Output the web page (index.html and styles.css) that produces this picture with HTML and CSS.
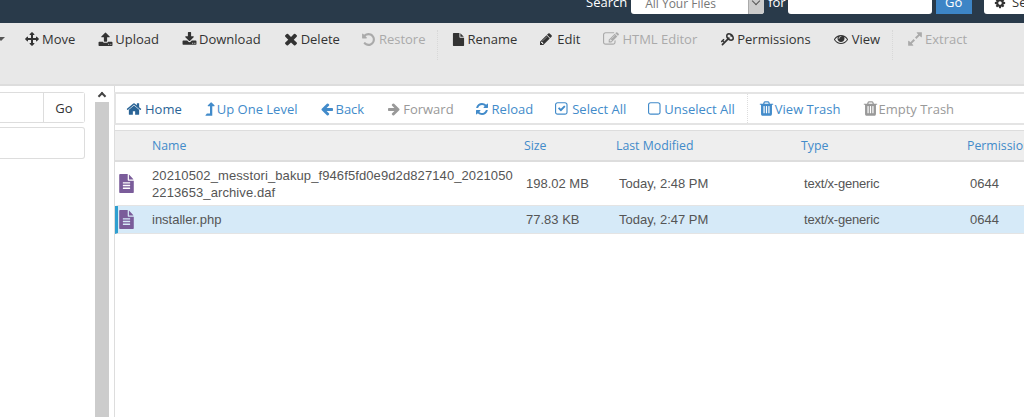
FILE: index.html
```html
<!DOCTYPE html>
<html lang="en">
<head>
    <meta charset="UTF-8">
    <title>File Manager</title>
    <link rel="stylesheet" href="styles.css">
</head>
<body>
    <svg class="sprite" xmlns="http://www.w3.org/2000/svg">
        <symbol id="i-home" viewBox="0 0 1792 1792"><path d="M1472 992v480q0 26-19 45t-45 19h-384v-384h-256v384h-384q-26 0-45-19t-19-45v-480q0-1 .5-3t.5-3l575-474 575 474q1 2 1 6zm223-69l-62 74q-8 9-21 11h-3q-13 0-21-7l-692-577-692 577q-12 8-24 7-13-2-21-11l-62-74q-8-10-7-23.5t11-21.5l719-599q32-26 76-26t76 26l244 204v-195q0-14 9-23t23-9h192q14 0 23 9t9 23v408l219 182q10 8 11 21.5t-7 23.5z"/></symbol>
        <symbol id="i-left" viewBox="0 0 1792 1792"><path d="M1664 896v128q0 53-32.5 90.5t-84.5 37.5h-704l293 294q38 36 38 90t-38 90l-75 76q-37 37-90 37-52 0-91-37l-651-652q-37-37-37-90 0-52 37-91l651-650q38-38 91-38 52 0 90 38l75 74q38 38 38 91t-38 91l-293 293h704q52 0 84.5 37.5t32.5 90.5z"/></symbol>
        <symbol id="i-right" viewBox="0 0 1792 1792"><path d="M1600 960q0 54-37 91l-651 651q-39 37-91 37-51 0-90-37l-75-75q-38-38-38-91t38-91l293-293h-704q-52 0-84.5-37.5t-32.5-90.5v-128q0-53 32.5-90.5t84.5-37.5h704l-293-294q-38-36-38-90t38-90l75-75q38-38 90-38 53 0 91 38l651 651q37 35 37 90z"/></symbol>
        <symbol id="i-times" viewBox="0 0 1792 1792"><path d="M1490 1322q0 40-28 68l-136 136q-28 28-68 28t-68-28l-294-294-294 294q-28 28-68 28t-68-28l-136-136q-28-28-28-68t28-68l294-294-294-294q-28-28-28-68t28-68l136-136q28-28 68-28t68 28l294 294 294-294q28-28 68-28t68 28l136 136q28 28 28 68t-28 68l-294 294 294 294q28 28 28 68z"/></symbol>
        <symbol id="i-file" viewBox="0 0 1792 1792"><path d="M1152 512v-472q22 14 36 28l408 408q14 14 28 36h-472zm-128 32q0 40 28 68t68 28h544v1056q0 40-28 68t-68 28h-1344q-40 0-68-28t-28-68v-1600q0-40 28-68t68-28h800v544z"/></symbol>
        <symbol id="i-file-text" viewBox="0 0 1792 1792" preserveAspectRatio="none"><path d="M1596 476q14 14 28 36h-472v-472q22 14 36 28zm-476 164h544v1056q0 40-28 68t-68 28h-1344q-40 0-68-28t-28-68v-1600q0-40 28-68t68-28h800v544q0 40 28 68t68 28zm160 736v-64q0-14-9-23t-23-9h-704q-14 0-23 9t-9 23v64q0 14 9 23t23 9h704q14 0 23-9t9-23zm0-256v-64q0-14-9-23t-23-9h-704q-14 0-23 9t-9 23v64q0 14 9 23t23 9h704q14 0 23-9t9-23zm0-256v-64q0-14-9-23t-23-9h-704q-14 0-23 9t-9 23v64q0 14 9 23t23 9h704q14 0 23-9t9-23z"/></symbol>
        <symbol id="i-pencil" viewBox="0 0 1792 1792"><path d="M491 1536l91-91-235-235-91 91v107h128v128h107zm523-928q0-22-22-22-10 0-17 7l-542 542q-7 7-7 17 0 22 22 22 10 0 17-7l542-542q7-7 7-17zm-54-192l416 416-832 832h-416v-416zm683 96q0 53-37 90l-166 166-416-416 166-165q36-38 90-38 53 0 91 38l235 234q37 39 37 91z"/></symbol>
        <symbol id="i-move" viewBox="0 0 1792 1792"><path d="M1792 896q0 26-19 45l-256 256q-19 19-45 19t-45-19-19-45v-128h-384v384h128q26 0 45 19t19 45-19 45l-256 256q-19 19-45 19t-45-19l-256-256q-19-19-19-45t19-45 45-19h128v-384h-384v128q0 26-19 45t-45 19-45-19l-256-256q-19-19-19-45t19-45l256-256q19-19 45-19t45 19 19 45v128h384v-384h-128q-26 0-45-19t-19-45 19-45l256-256q19-19 45-19t45 19l256 256q19 19 19 45t-19 45-45 19h-128v384h384v-128q0-26 19-45t45-19 45 19l256 256q19 19 19 45z"/></symbol>
        <symbol id="i-upload" viewBox="0 0 1792 1792"><path d="M1344 1472q0-26-19-45t-45-19-45 19-19 45 19 45 45 19 45-19 19-45zm256 0q0-26-19-45t-45-19-45 19-19 45 19 45 45 19 45-19 19-45zm128-224v320q0 40-28 68t-68 28h-1472q-40 0-68-28t-28-68v-320q0-40 28-68t68-28h427q21 56 70.5 92t110.5 36h256q61 0 110.5-36t70.5-92h427q40 0 68 28t28 68zm-325-648q-17 40-59 40h-256v448q0 26-19 45t-45 19h-256q-26 0-45-19t-19-45v-448h-256q-42 0-59-40-17-39 14-69l448-448q18-19 45-19t45 19l448 448q31 30 14 69z"/></symbol>
        <symbol id="i-download" viewBox="0 0 1792 1792"><path d="M1344 1344q0-26-19-45t-45-19-45 19-19 45 19 45 45 19 45-19 19-45zm256 0q0-26-19-45t-45-19-45 19-19 45 19 45 45 19 45-19 19-45zm128-224v320q0 40-28 68t-68 28h-1472q-40 0-68-28t-28-68v-320q0-40 28-68t68-28h465l135 136q58 56 136 56t136-56l136-136h464q40 0 68 28t28 68zm-325-569q17 41-14 70l-448 448q-18 19-45 19t-45-19l-448-448q-31-29-14-70 17-39 59-39h256v-448q0-26 19-45t45-19h256q26 0 45 19t19 45v448h256q42 0 59 39z"/></symbol>
        <symbol id="i-undo" viewBox="0 0 1792 1792"><path d="M1664 896q0 156-61 298t-164 245-245 164-298 61q-172 0-327-72.5t-264-204.5q-7-10-6.5-22.5t8.5-20.5l137-138q10-9 25-9 16 2 23 12 73 95 179 147t225 52q104 0 198.5-40.5t163.5-109.5 109.5-163.5 40.5-198.5-40.5-198.5-109.5-163.5-163.5-109.5-198.5-40.5q-98 0-188 35.5t-160 101.5l137 138q31 30 14 69-17 40-59 40h-448q-26 0-45-19t-19-45v-448q0-42 40-59 39-17 69 14l130 129q107-101 244.5-156.5t284.5-55.5q156 0 298 61t245 164 164 245 61 298z"/></symbol>
        <symbol id="i-eye" viewBox="0 0 1792 1792"><path d="M1664 960q-152-236-381-353 61 104 61 225 0 185-131.5 316.5t-316.5 131.5-316.5-131.5-131.5-316.5q0-121 61-225-229 117-381 353 133 205 333.5 326.5t434.5 121.5 434.5-121.5 333.5-326.5zm-720-384q0-20-14-34t-34-14q-125 0-214.5 89.5t-89.5 214.5q0 20 14 34t34 14 34-14 14-34q0-86 61-147t147-61q20 0 34-14t14-34zm848 384q0 34-20 69-140 230-376.5 368.5t-499.5 138.5-499.5-139-376.5-368q-20-35-20-69t20-69q140-229 376.5-368t499.5-139 499.5 139 376.5 368q20 35 20 69z"/></symbol>
        <symbol id="i-key" viewBox="0 0 1792 1792"><path d="M832 512q0-80-56-136t-136-56-136 56-56 136q0 42 19 83-41-19-83-19-80 0-136 56t-56 136 56 136 136 56 136-56 56-136q0-42-19-83 41 19 83 19 80 0 136-56t56-136zm851 704q0 17-49 66t-66 49q-9 0-28.5-16t-36.5-33-38.5-40-24.5-26l-96 96 220 220q28 28 28 68 0 42-39 81t-81 39q-40 0-68-28l-671-671q-176 131-365 131-163 0-265.5-102.5t-102.5-265.5q0-160 95-313t248-248 313-95q163 0 265.5 102.5t102.5 265.5q0 189-131 365l355 355 96-96q-3-3-26-24.5t-40-38.5-33-36.5-16-28.5q0-17 49-66t66-49q13 0 23 10 6 6 46 44.5t82 79.5 86.5 86 73 78 28.5 41z"/></symbol>
        <symbol id="i-trash" viewBox="0 0 1792 1792"><path d="M704 1376v-704q0-14-9-23t-23-9h-64q-14 0-23 9t-9 23v704q0 14 9 23t23 9h64q14 0 23-9t9-23zm256 0v-704q0-14-9-23t-23-9h-64q-14 0-23 9t-9 23v704q0 14 9 23t23 9h64q14 0 23-9t9-23zm256 0v-704q0-14-9-23t-23-9h-64q-14 0-23 9t-9 23v704q0 14 9 23t23 9h64q14 0 23-9t9-23zm-544-992h448l-48-117q-7-9-17-11h-317q-10 2-17 11zm928 32v64q0 14-9 23t-23 9h-96v948q0 83-47 143.5t-113 60.5h-832q-66 0-113-58.5t-47-141.5v-952h-96q-14 0-23-9t-9-23v-64q0-14 9-23t23-9h309l70-167q15-37 54-63t79-26h320q40 0 79 26t54 63l70 167h309q14 0 23 9t9 23z"/></symbol>
        <symbol id="i-refresh" viewBox="0 0 1792 1792"><path d="M1639 1056q0 5-1 7-64 268-268 434.5t-478 166.5q-146 0-282.5-55t-243.5-157l-129 129q-19 19-45 19t-45-19-19-45v-448q0-26 19-45t45-19h448q26 0 45 19t19 45-19 45l-137 137q71 66 161 102t187 36q134 0 250-65t186-179q11-17 53-117 8-23 30-23h192q13 0 22.5 9.5t9.5 22.5zm25-800v448q0 26-19 45t-45 19h-448q-26 0-45-19t-19-45 19-45l138-138q-148-137-349-137-134 0-250 65t-186 179q-11 17-53 117-8 23-30 23h-199q-13 0-22.5-9.5t-9.5-22.5v-7q65-268 270-434.5t480-166.5q146 0 284 55.5t245 156.5l130-129q19-19 45-19t45 19 19 45z"/></symbol>
        <symbol id="i-square" viewBox="0 0 1792 1792"><path d="M1120 256h-832q-66 0-113 47t-47 113v832q0 66 47 113t113 47h832q66 0 113-47t47-113v-832q0-66-47-113t-113-47zm288 160v832q0 119-84.5 203.5t-203.5 84.5h-832q-119 0-203.5-84.5t-84.5-203.5v-832q0-119 84.5-203.5t203.5-84.5h832q119 0 203.5 84.5t84.5 203.5z"/></symbol>
        <symbol id="i-check" viewBox="0 0 1792 1792"><path d="M1120 256h-832q-66 0-113 47t-47 113v832q0 66 47 113t113 47h832q66 0 113-47t47-113v-832q0-66-47-113t-113-47zm288 160v832q0 119-84.5 203.5t-203.5 84.5h-832q-119 0-203.5-84.5t-84.5-203.5v-832q0-119 84.5-203.5t203.5-84.5h832q119 0 203.5 84.5t84.5 203.5z"/><path d="M1148 614l-84-84q-14-14-34-14t-34 14l-340 340-148-148q-14-14-34-14t-34 14l-84 84q-14 14-14 34t14 34l266 266q14 14 34 14t34-14l458-458q14-14 14-34t-14-34z"/></symbol>
        <symbol id="i-level-up" viewBox="0 0 1792 1792"><path d="M1402 557q-17 39-59 39h-192v1024q0 14-9 23t-23 9h-704q-21 0-29-18-8-20 5-35l160-192q9-11 25-11h320v-800h-192q-42 0-59-39-17-41 14-70l320-320q18-18 45-18t45 18l320 320q31 29 14 70z"/></symbol>
        <symbol id="i-edit" viewBox="0 0 1792 1792"><path d="M888 1184l116-116-152-152-116 116v56h96v96h56zm440-720q-16-16-33 1l-350 350q-17 17-1 33t33-1l350-350q17-17 1-33zm80 594v190q0 119-84.5 203.5t-203.5 84.5h-832q-119 0-203.5-84.5t-84.5-203.5v-832q0-119 84.5-203.5t203.5-84.5h832q63 0 117 25 15 7 18 23 3 17-9 29l-49 49q-14 14-32 8-23-6-45-6h-832q-66 0-113 47t-47 113v832q0 66 47 113t113 47h832q66 0 113-47t47-113v-126q0-13 9-22l64-64q15-15 35-7t20 29zm-96-738l288 288-672 672h-288v-288zm444 132l-92 92-288-288 92-92q27-27 68-27t68 27l152 152q27 27 27 68t-27 68z"/></symbol>
        <symbol id="i-expand" viewBox="0 0 1792 1792"><path d="M883 1056q0 13-10 23l-332 332 144 144q19 19 19 45t-19 45-45 19h-448q-26 0-45-19t-19-45v-448q0-26 19-45t45-19 45 19l144 144 332-332q10-10 23-10t23 10l114 114q10 10 10 23zm781-864v448q0 26-19 45t-45 19-45-19l-144-144-332 332q-10 10-23 10t-23-10l-114-114q-10-10-10-23t10-23l332-332-144-144q-19-19-19-45t19-45 45-19h448q26 0 45 19t19 45z"/></symbol>
        <symbol id="i-gear" viewBox="0 0 1792 1792"><path d="M1152 896q0-106-75-181t-181-75-181 75-75 181 75 181 181 75 181-75 75-181zm512-109v222q0 12-8 23t-20 13l-185 28q-19 54-39 91 35 50 107 138 10 12 10 25t-9 23q-27 37-99 108t-94 71q-12 0-26-9l-138-108q-44 23-91 38-16 136-29 186-7 28-36 28h-222q-14 0-24.5-8.5t-11.5-21.5l-28-184q-49-16-90-37l-141 107q-10 9-25 9-14 0-25-11-126-114-165-168-7-10-7-23 0-12 8-23 15-21 51-66.5t54-70.5q-27-50-41-99l-183-27q-13-2-21-12.5t-8-23.5v-222q0-12 8-23t19-13l186-28q14-46 39-92-40-57-107-138-10-12-10-24 0-10 9-23 26-36 98.5-107.5t94.5-71.5q13 0 26 10l138 107q44-23 91-38 16-136 29-186 7-28 36-28h222q14 0 24.5 8.5t11.5 21.5l28 184q49 16 90 37l142-107q9-9 24-9 13 0 25 10 129 119 165 170 7 8 7 22 0 12-8 23-15 21-51 66.5t-54 70.5q26 50 41 98l183 28q13 2 21 12.5t8 23.5z"/></symbol>
    </svg>

    <!-- top search bar -->
    <header class="topbar">
        <span class="topbar-label">Search</span>
        <div class="search-select">
            <span>All Your Files</span>
            <span class="search-arrow"></span>
        </div>
        <span class="topbar-label for-label">for</span>
        <div class="search-input"></div>
        <button class="search-go">Go</button>
        <button class="settings-btn"><svg class="icon"><use href="#i-gear"/></svg> Settings</button>
    </header>

    <!-- file actions -->
    <nav class="toolbar">
        <span class="tool-caret"></span>
        <a class="tool"><svg class="icon"><use href="#i-move"/></svg>Move</a>
        <a class="tool"><svg class="icon ic-transfer"><use href="#i-upload"/></svg>Upload</a>
        <a class="tool"><svg class="icon ic-transfer"><use href="#i-download"/></svg>Download</a>
        <a class="tool"><svg class="icon ic-delete"><use href="#i-times"/></svg>Delete</a>
        <a class="tool disabled"><svg class="icon ic-restore"><use href="#i-undo"/></svg>Restore</a>
        <span class="divider"></span>
        <a class="tool"><svg class="icon ic-rename"><use href="#i-file"/></svg>Rename</a>
        <a class="tool"><svg class="icon ic-pencil"><use href="#i-pencil"/></svg>Edit</a>
        <a class="tool disabled"><svg class="icon ic-editor"><use href="#i-edit"/></svg>HTML Editor</a>
        <a class="tool"><svg class="icon flip"><use href="#i-key"/></svg>Permissions</a>
        <a class="tool"><svg class="icon ic-eye"><use href="#i-eye"/></svg>View</a>
        <span class="divider"></span>
        <a class="tool disabled"><svg class="icon ic-extract"><use href="#i-expand"/></svg>Extract</a>
    </nav>

    <div class="main">
        <!-- left tree -->
        <aside class="sidebar">
            <div class="path-group">
                <div class="path-input"></div>
                <button class="path-go">Go</button>
            </div>
            <div class="tree-box"></div>
        </aside>

        <div class="scrollbar">
            <div class="scroll-up"><span class="scroll-arrow"></span></div>
            <div class="scroll-thumb"></div>
        </div>

        <!-- file list -->
        <section class="content">
            <div class="navbar">
                <a class="nav-item"><svg class="icon ic-home"><use href="#i-home"/></svg><span class="dark-link">Home</span></a>
                <a class="nav-item"><svg class="icon ic-up"><use href="#i-level-up"/></svg>Up One Level</a>
                <a class="nav-item"><svg class="icon ic-back"><use href="#i-left"/></svg>Back</a>
                <a class="nav-item disabled"><svg class="icon"><use href="#i-right"/></svg>Forward</a>
                <a class="nav-item"><svg class="icon ic-reload"><use href="#i-refresh"/></svg>Reload</a>
                <a class="nav-item"><svg class="icon ic-box"><use href="#i-check"/></svg>Select All</a>
                <a class="nav-item"><svg class="icon ic-box ic-box-empty"><use href="#i-square"/></svg>Unselect All</a>
                <span class="divider"></span>
                <a class="nav-item"><svg class="icon ic-trash"><use href="#i-trash"/></svg>View Trash</a>
                <a class="nav-item disabled"><svg class="icon ic-trash ic-trash-empty"><use href="#i-trash"/></svg>Empty Trash</a>
            </div>

            <div class="file-table">
                <div class="file-row file-head">
                    <div class="col-icon"></div>
                    <div class="col-name">Name</div>
                    <div class="col-size">Size</div>
                    <div class="col-date">Last Modified</div>
                    <div class="col-type">Type</div>
                    <div class="col-perm">Permissions</div>
                </div>
                <div class="file-row file-tall">
                    <div class="col-icon"><svg class="file-icon"><use href="#i-file-text"/></svg></div>
                    <div class="col-name">20210502_messtori_bakup_f946f5fd0e9d2d827140_20210502213653_archive.daf</div>
                    <div class="col-size">198.02 MB</div>
                    <div class="col-date">Today, 2:48 PM</div>
                    <div class="col-type">text/x-generic</div>
                    <div class="col-perm">0644</div>
                </div>
                <div class="file-row selected">
                    <div class="col-icon"><svg class="file-icon"><use href="#i-file-text"/></svg></div>
                    <div class="col-name">installer.php</div>
                    <div class="col-size">77.83 KB</div>
                    <div class="col-date">Today, 2:47 PM</div>
                    <div class="col-type">text/x-generic</div>
                    <div class="col-perm">0644</div>
                </div>
            </div>
        </section>
    </div>
</body>
</html>
```

FILE: styles.css
```css
* {
    box-sizing: border-box;
}
html, body {
    margin: 0;
    height: 417px;
    overflow: hidden;
    background: #fff;
}
body {
    font-family: "Open Sans", sans-serif;
    font-size: 13px;
    color: #333;
}
button {
    font-family: inherit;
}
.sprite {
    display: none;
}
.icon {
    width: 14px;
    height: 14px;
    fill: currentColor;
    flex: none;
    margin-right: 3px;
}
.flip {
    transform: scaleX(-1);
}

/* top search bar */
.topbar {
    height: 23px;
    background: #293a4a;
    display: flex;
    align-items: flex-end;
    padding: 0 0 9px 586px;
    color: #fff;
    white-space: nowrap;
    overflow: hidden;
}
.topbar-label {
    line-height: 18px;
    margin: 0 4px 3px 0;
}
.for-label {
    margin: 0 2px 3px 4px;
}
.search-select {
    flex: none;
    width: 133px;
    height: 30px;
    background: #fff;
    border-radius: 0 0 3px 3px;
    color: #777;
    font-size: 12px;
    display: flex;
    justify-content: space-between;
    align-items: flex-end;
    padding: 0 0 3px 14px;
    line-height: 15px;
}
.search-arrow {
    position: relative;
    width: 16px;
    height: 30px;
    margin-bottom: -3px;
    background: #ccc;
    border-left: 1px solid #aaa;
    border-radius: 0 0 3px 0;
}
.search-arrow::after {
    content: "";
    position: absolute;
    left: 4px;
    bottom: 10px;
    width: 5px;
    height: 5px;
    border-right: 1px solid #555;
    border-bottom: 1px solid #555;
    transform: rotate(45deg);
}
.search-input {
    flex: none;
    width: 144px;
    height: 30px;
    background: #fff;
    border-radius: 0 0 3px 3px;
}
.search-go {
    flex: none;
    width: 36px;
    height: 30px;
    margin-left: 4px;
    border: 0;
    background: #3d85c6;
    color: #fff;
    font-size: 13px;
    padding: 6px 0 0;
    line-height: 16px;
}
.settings-btn {
    flex: none;
    width: 80px;
    height: 30px;
    margin-left: 12px;
    border: 0;
    border-radius: 0 0 0 3px;
    background: #fff;
    color: #333;
    font-size: 13px;
    text-align: left;
    padding: 6px 0 0 10px;
    line-height: 16px;
}
.settings-btn .icon {
    width: 12px;
    height: 12px;
    vertical-align: -2px;
}

/* file actions */
.toolbar {
    height: 63px;
    background: #e8e8e8;
    border-bottom: 2px solid #ddd;
    display: flex;
    align-items: flex-start;
    gap: 23px;
    padding-top: 7px;
    overflow: hidden;
    white-space: nowrap;
}
.tool-caret {
    width: 0;
    height: 0;
    margin: 7px -3px 0 -3px;
    border-left: 4px solid transparent;
    border-right: 4px solid transparent;
    border-top: 4px solid #555;
}
.tool {
    display: flex;
    align-items: center;
    height: 18px;
    color: #333;
}
.tool.disabled {
    color: #aaa;
}
.divider {
    width: 0;
    height: 30px;
    border-left: 1px dotted #d8d8d8;
    margin: 0 -8px 0 -11px;
}
.ic-transfer {
    width: 15px;
    height: 15px;
    margin-right: 2px;
}
.ic-delete {
    width: 18px;
    height: 18px;
    margin: 0 1px 0 -2px;
}
.ic-restore {
    width: 15px;
    height: 15px;
    margin-left: -2px;
}
.ic-rename {
    width: 13px;
    height: 13px;
    margin: 0 2px 0 -1px;
}
.ic-pencil {
    margin: 0 4px 0 -1px;
}
.ic-editor {
    width: 16px;
    height: 16px;
}
.ic-eye {
    margin-right: 4px;
}
.ic-extract {
    width: 16px;
    height: 16px;
    margin: 0 2px 0 -1px;
}

/* layout below the toolbar */
.main {
    display: flex;
    align-items: flex-start;
    height: 331px;
}
.sidebar {
    flex: none;
    width: 85px;
    padding-top: 6px;
}
.path-group {
    display: flex;
    height: 31px;
    border: 1px solid #ddd;
    border-left: 0;
    border-radius: 0 3px 3px 0;
}
.path-input {
    width: 43px;
}
.path-go {
    flex: 1;
    border: 0;
    border-left: 1px solid #ddd;
    background: #fff;
    color: #333;
    font-size: 13px;
    padding: 0;
}
.tree-box {
    height: 32px;
    margin-top: 4px;
    border: 1px solid #ddd;
    border-left: 0;
    border-radius: 0 3px 3px 0;
}
.scrollbar {
    flex: none;
    width: 14px;
    height: 100%;
    margin-left: 10px;
    display: flex;
    flex-direction: column;
}
.scroll-up {
    height: 16px;
    display: flex;
    justify-content: center;
    padding-top: 7px;
}
.scroll-arrow {
    width: 6px;
    height: 6px;
    border-left: 2px solid #444;
    border-top: 2px solid #444;
    transform: rotate(45deg);
}
.scroll-thumb {
    flex: 1;
    background: #ccc;
}

/* file list */
.content {
    flex: none;
    width: 910px;
    margin-left: 5px;
    height: 100%;
    padding-top: 6px;
    border-left: 1px solid #ddd;
}
.navbar {
    height: 33px;
    display: flex;
    align-items: center;
    gap: 23px;
    margin-left: -1px;
    padding-left: 11px;
    border: 2px solid #e4e4e4;
    border-right: 0;
    color: #428bca;
    white-space: nowrap;
}
.nav-item {
    display: flex;
    align-items: center;
}
.nav-item .icon {
    margin-right: 2px;
}
.nav-item.disabled {
    color: #999;
}
.dark-link {
    color: #2a6496;
}
.navbar .divider {
    height: 29px;
    border-left-color: #ddd;
    margin: 0 -12px 0 -11px;
}
.nav-item .ic-home {
    width: 16px;
    height: 16px;
    margin: 0 3px 0 -1px;
    color: #2a6496;
}
.nav-item .ic-up {
    width: 16px;
    height: 16px;
    margin: 0 -1px 0 -3px;
}
.nav-item .ic-back {
    margin-right: 1px;
}
.nav-item .ic-reload {
    margin: 0 3px 0 -2px;
}
.nav-item .ic-box {
    width: 16px;
    height: 16px;
    margin: 0 1px 0 -1px;
}
.nav-item .ic-box-empty {
    margin-right: 0;
}
.nav-item .ic-trash {
    width: 17px;
    height: 17px;
    margin: 0 0 0 -1px;
}
.nav-item .ic-trash-empty {
    margin-right: -1px;
}
.file-table {
    margin-top: 5px;
    font-family: "Liberation Sans", Arial, sans-serif;
    font-size: 13px;
    line-height: 17px;
}
.file-row {
    display: flex;
    align-items: center;
    height: 28px;
    border-bottom: 1px solid #e4e4e4;
    border-left: 3px solid transparent;
    color: #555;
}
.file-row.file-tall {
    height: 44px;
}
.file-tall .col-name {
    letter-spacing: 0.1px;
}
.file-row.file-head {
    height: 32px;
    background: #eee;
    border-top: 1px solid #ddd;
    border-bottom: 2px solid #ddd;
    border-left: 0;
    font-family: "Open Sans", sans-serif;
    font-size: 12.3px;
    color: #428bca;
}
.selected {
    background: #d6eaf8;
    border-left-color: #2f9fd0;
}
.col-icon {
    width: 34px;
    flex: none;
    display: flex;
}
.file-head .col-icon {
    width: 37px;
}
.col-name {
    width: 372px;
    flex: none;
    padding-right: 6px;
    word-break: break-all;
}
.col-size {
    width: 92px;
    flex: none;
    padding-left: 2px;
}
.col-date {
    width: 185px;
    flex: none;
    padding-left: 3px;
}
.col-type {
    width: 166px;
    flex: none;
    padding-left: 3px;
    letter-spacing: -0.2px;
}
.col-perm {
    flex: none;
    padding-left: 3px;
    white-space: nowrap;
}
.file-head .col-size,
.file-head .col-date,
.file-head .col-type,
.file-head .col-perm {
    padding-left: 0;
    letter-spacing: 0;
}
.file-icon {
    width: 17px;
    height: 19px;
    fill: #7a5c9a;
}
```
